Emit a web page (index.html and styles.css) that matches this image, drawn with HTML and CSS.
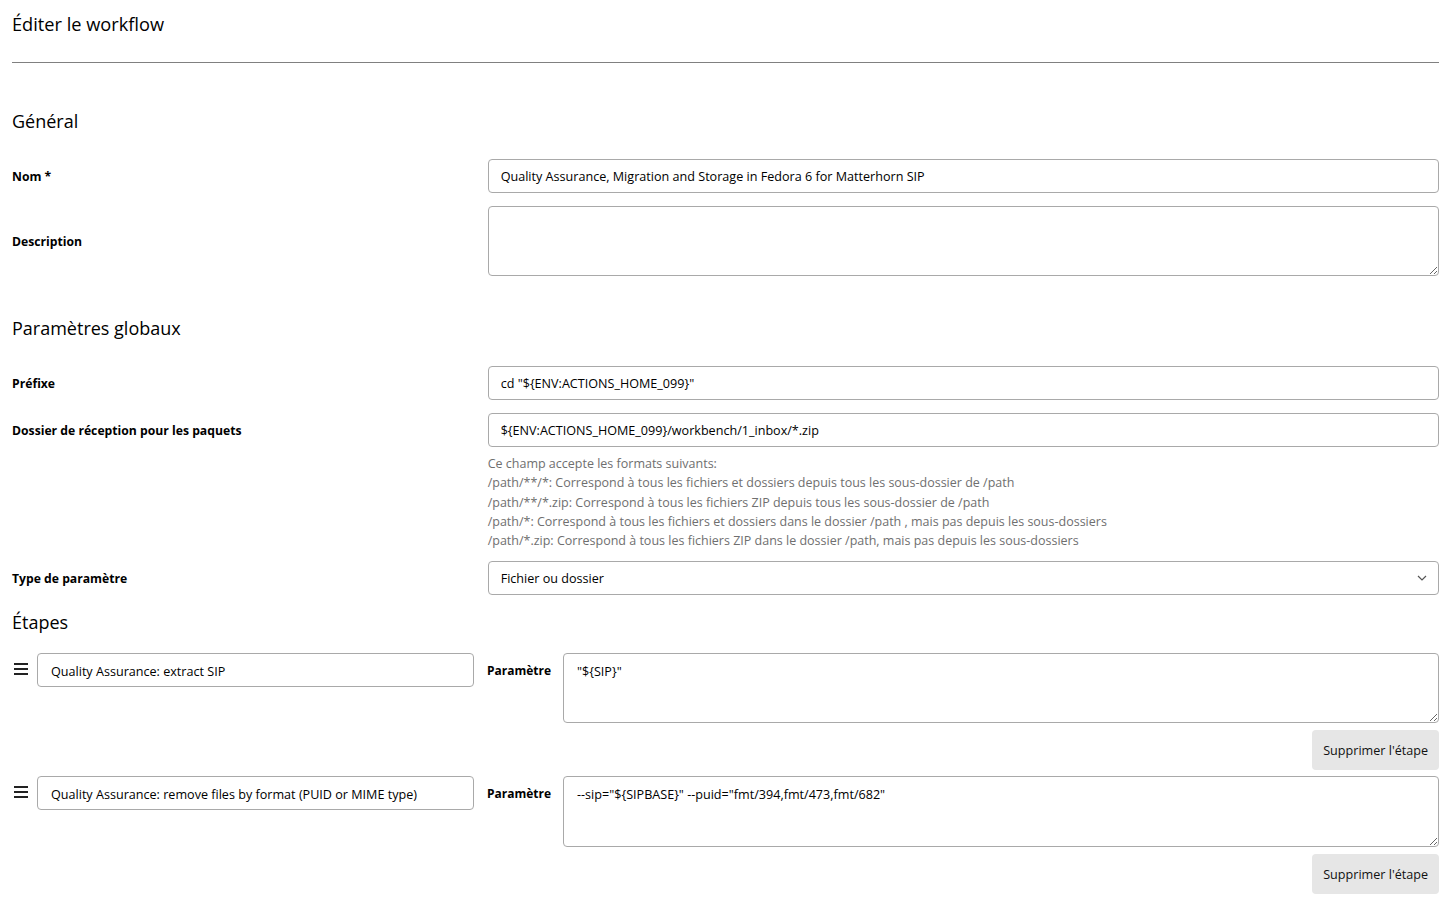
FILE: index.html
```html
<!DOCTYPE html>
<html lang="fr">
<head>
<meta charset="utf-8">
<title>Éditer le workflow</title>
<link rel="stylesheet" href="styles.css">
</head>
<body>
<h1 class="page-title">Éditer le workflow</h1>
<hr class="divider">

<h2 class="section-title section-first">Général</h2>
<div class="form-grid">
  <label class="field-label" for="nom">Nom *</label>
  <input class="field-input" id="nom" type="text" value="Quality Assurance, Migration and Storage in Fedora 6 for Matterhorn SIP">
  <label class="field-label" for="desc">Description</label>
  <textarea class="field-input field-textarea" id="desc"></textarea>
</div>

<h2 class="section-title section-global">Paramètres globaux</h2>
<div class="form-grid">
  <label class="field-label" for="prefixe">Préfixe</label>
  <input class="field-input" id="prefixe" type="text" value='cd "${ENV:ACTIONS_HOME_099}"'>
  <label class="field-label" for="dossier">Dossier de réception pour les paquets</label>
  <input class="field-input" id="dossier" type="text" value="${ENV:ACTIONS_HOME_099}/workbench/1_inbox/*.zip">
  <div class="help-text">
    <div>Ce champ accepte les formats suivants:</div>
    <div>/path/**/*: Correspond à tous les fichiers et dossiers depuis tous les sous-dossier de /path</div>
    <div>/path/**/*.zip: Correspond à tous les fichiers ZIP depuis tous les sous-dossier de /path</div>
    <div>/path/*: Correspond à tous les fichiers et dossiers dans le dossier /path , mais pas depuis les sous-dossiers</div>
    <div>/path/*.zip: Correspond à tous les fichiers ZIP dans le dossier /path, mais pas depuis les sous-dossiers</div>
  </div>
  <label class="field-label" for="type">Type de paramètre</label>
  <div class="select-wrap">
    <select class="field-input field-select" id="type">
      <option>Fichier ou dossier</option>
    </select>
    <svg class="select-chevron" width="10" height="6" viewBox="0 0 10 6"><path d="M1 1l4 4 4-4" fill="none" stroke="#555" stroke-width="1.2"/></svg>
  </div>
</div>

<h2 class="section-title section-steps">Étapes</h2>
<div class="steps">
  <div class="step">
    <div class="step-row">
      <span class="step-handle"><svg width="14" height="12" viewBox="0 0 14 12"><rect x="0" y="0" width="14" height="2" fill="#222"/><rect x="0" y="5" width="14" height="2" fill="#222"/><rect x="0" y="10" width="14" height="2" fill="#222"/></svg></span>
      <input class="field-input step-name" type="text" value="Quality Assurance: extract SIP">
      <span class="step-label">Paramètre</span>
      <textarea class="field-input step-param">"${SIP}"</textarea>
    </div>
    <div class="step-actions"><button class="btn-remove" type="button">Supprimer l'étape</button></div>
  </div>
  <div class="step">
    <div class="step-row">
      <span class="step-handle"><svg width="14" height="12" viewBox="0 0 14 12"><rect x="0" y="0" width="14" height="2" fill="#222"/><rect x="0" y="5" width="14" height="2" fill="#222"/><rect x="0" y="10" width="14" height="2" fill="#222"/></svg></span>
      <input class="field-input step-name" type="text" value="Quality Assurance: remove files by format (PUID or MIME type)">
      <span class="step-label">Paramètre</span>
      <textarea class="field-input step-param step-param-tall">--sip="${SIPBASE}" --puid="fmt/394,fmt/473,fmt/682"</textarea>
    </div>
    <div class="step-actions"><button class="btn-remove" type="button">Supprimer l'étape</button></div>
  </div>
</div>
</body>
</html>
```

FILE: styles.css
```css
* { box-sizing: border-box; }

body {
  margin: 0;
  padding: 0 15px 0 12px;
  font-family: "Open Sans", "Noto Sans", sans-serif;
  font-size: 12.6px;
  color: #000;
  background: #fff;
}

.page-title {
  margin: 10px 0 0;
  font-size: 18.2px;
  line-height: 28px;
  font-weight: 400;
}

.divider {
  margin: 24px 0 0;
  border: 0;
  border-top: 1px solid #808080;
  height: 0;
}

.section-title {
  font-size: 18px;
  line-height: 24px;
  font-weight: 400;
  margin: 0;
}
.section-first { margin-top: 46px; margin-bottom: 26px; }
.section-global { margin-top: 40px; margin-bottom: 26px; }
.section-steps { margin-top: 15px; margin-bottom: 19px; }

.form-grid {
  display: grid;
  grid-template-columns: 33.333% 66.667%;
  row-gap: 13px;
  align-items: center;
}

.field-label {
  font-weight: 700;
  font-size: 12.2px;
}

.field-input {
  display: block;
  width: 100%;
  height: 34px;
  padding: 0 12px;
  font-family: inherit;
  font-size: 12.6px;
  color: #000;
  background: #fff;
  border: 1px solid #a9a9a9;
  border-radius: 4px;
  outline: none;
}

.field-textarea {
  height: 70px;
  padding: 8px 12px;
  resize: vertical;
}

.help-text {
  grid-column: 2;
  margin-top: -6px;
  color: #6f6f6f;
  font-size: 12.5px;
  line-height: 19.25px;
  margin-bottom: -2px;
}

.select-wrap { position: relative; }
.field-select {
  appearance: none;
  -webkit-appearance: none;
  padding-top: 1px;
}
.select-chevron {
  position: absolute;
  right: 12px;
  top: 14px;
  pointer-events: none;
}

.steps { display: flex; flex-direction: column; }

.step { margin-bottom: 6px; }

.step-row {
  display: flex;
  align-items: flex-start;
}

.step-handle {
  width: 25px;
  flex: none;
  padding: 10px 0 0 2px;
  line-height: 0;
}

.step-name {
  width: 437px;
  flex: none;
  padding: 2px 13px 0;
}

.step-label {
  width: 76px;
  flex: none;
  margin-left: 13px;
  padding-top: 9px;
  font-weight: 700;
  font-size: 12px;
  line-height: 18px;
}

.step-param {
  flex: 1;
  width: auto;
  height: 70px;
  padding: 9px 13px 8px;
  resize: vertical;
}
.step-param-tall { height: 71px; }

.step-actions {
  display: flex;
  justify-content: flex-end;
  margin-top: 7px;
}

.btn-remove {
  font-family: inherit;
  font-size: 12.6px;
  color: #111;
  background: #e6e6e6;
  border: 0;
  border-radius: 4px;
  height: 40px;
  padding: 0 11px;
}
```
